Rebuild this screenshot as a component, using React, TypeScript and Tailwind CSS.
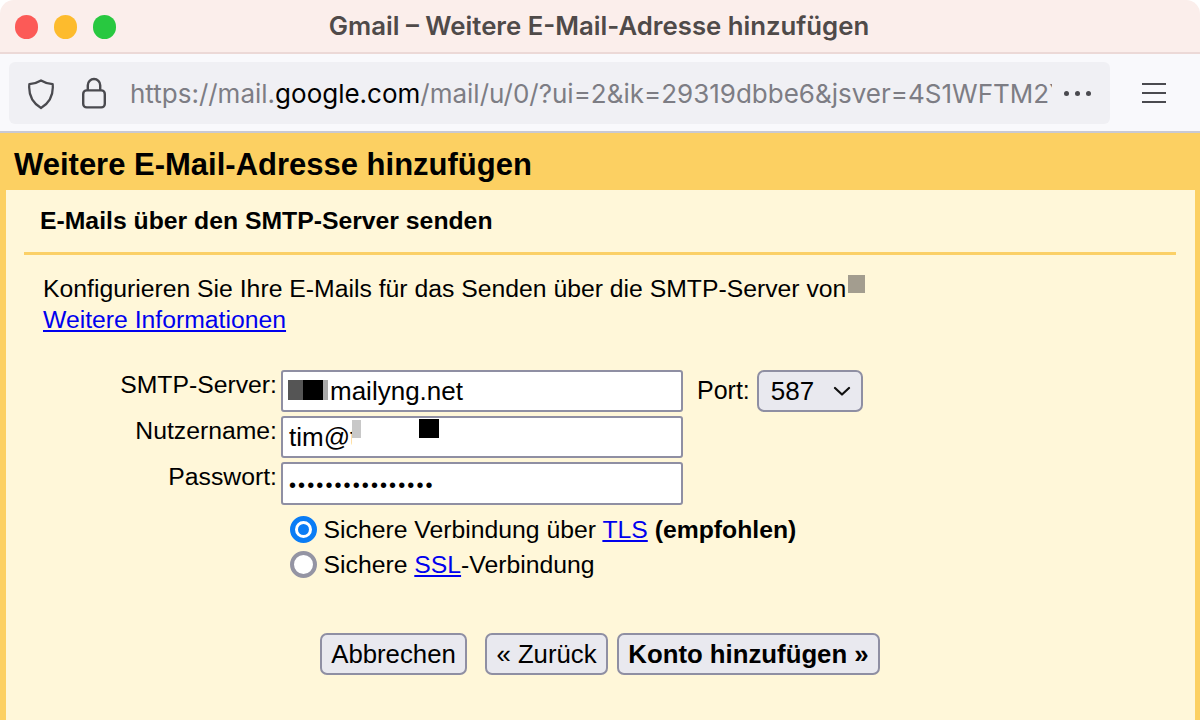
import React from "react";

const label = "w-[277px] text-right shrink-0 text-[24.75px] leading-[30px]";
const input = "relative w-[402px] h-[42px] bg-white border-2 border-[#8f8fa3] rounded-[3px] flex items-center pl-[6px] shrink-0 text-[26px] ml-[4px]";
const btn = "h-[42px] bg-[#e9e9ef] border-2 border-[#8f8fa3] rounded-[7px] flex items-center";

export default function App() {
  return (
    <div className="w-[1200px] h-[720px] overflow-hidden bg-white flex flex-col font-['Liberation_Sans',Arial,sans-serif] text-black">
      {/* title bar */}
      <div className="relative h-[54px] shrink-0 flex items-center justify-center bg-[#fbeeeb] border-b-2 border-[#ecd9d7] rounded-t-[14px]">
        <div className="absolute left-[15px] top-[15px] flex gap-[16px]">
          <span className="w-[23px] h-[24px] rounded-full bg-[#fc5a57]" />
          <span className="w-[23px] h-[24px] rounded-full bg-[#fdbb2d]" />
          <span className="w-[23px] h-[24px] rounded-full bg-[#28c840]" />
        </div>
        <span className="font-['Inter',sans-serif] font-semibold text-[25.75px] pr-[2px] text-[#4f4a49]">Gmail – Weitere E-Mail-Adresse hinzufügen</span>
      </div>
      {/* toolbar */}
      <div className="h-[79px] shrink-0 flex items-center bg-[#f9f9fc] border-b-2 border-[#c9c9d3] pl-[9px]">
        <div className="w-[1101px] h-[62px] rounded-[6px] bg-[#f0f0f4] flex items-center pl-[18px] pr-[16px]">
          <svg width="28" height="32" viewBox="0 0 30 34" fill="none" stroke="#4a4a4f" strokeWidth="2.4" strokeLinejoin="round" className="shrink-0 mt-[2px]">
            <path d="M15 2.5 C19 5 23 6 27.5 6.5 C28.5 17 25 26 15 32 C5 26 1.5 17 2.5 6.5 C7 6 11 5 15 2.5 Z" />
          </svg>
          <svg width="26" height="34" viewBox="0 0 26 34" fill="none" stroke="#4a4a4f" strokeWidth="2.4" className="shrink-0 ml-[26px] mt-[2px]">
            <rect x="2.2" y="13.4" width="21.6" height="17" rx="3.5" />
            <path d="M6.8 13.4 V8.2 a6.2 6.2 0 0 1 12.4 0 V13.4" />
          </svg>
          <div className="ml-[23px] w-[922px] pt-[2px] overflow-hidden whitespace-nowrap font-['Inter',sans-serif] text-[26px] text-[#7d7d84]">
            https://mail.<span className="text-black">google.com</span>/mail/u/0/?ui=2&amp;ik=29319dbbe6&amp;jsver=4S1WFTM2Y
          </div>
          <div className="ml-[12px] mt-[1px] flex gap-[6px] shrink-0">
            <span className="w-[5px] h-[5px] rounded-full bg-[#4a4a4f]" />
            <span className="w-[5px] h-[5px] rounded-full bg-[#4a4a4f]" />
            <span className="w-[5px] h-[5px] rounded-full bg-[#4a4a4f]" />
          </div>
        </div>
        <div className="ml-[32px] flex flex-col gap-[7px] shrink-0">
          <span className="w-[24px] h-[2px] bg-[#4a4a4f]" />
          <span className="w-[24px] h-[2px] bg-[#4a4a4f]" />
          <span className="w-[24px] h-[2px] bg-[#4a4a4f]" />
        </div>
      </div>
      {/* page */}
      <div className="flex-1 bg-[#fcd062] flex flex-col pl-[6px] pr-[5px]">
        <h1 className="h-[57px] shrink-0 flex items-center pl-[8px] pt-[7px] text-[31px] font-bold">Weitere E-Mail-Adresse hinzufügen</h1>
        <div className="flex-1 bg-[#fff7d9] pl-[18px] pr-[19px]">
          <div className="h-[65px] border-b-[3px] border-[#fbd067] pl-[16px] flex items-center text-[24.75px] font-bold">E-Mails über den SMTP-Server senden</div>
          <div className="pl-[19px] pt-[18px] text-[24.75px] leading-[31px]">
            <div className="flex items-start">
              Konfigurieren Sie Ihre E-Mails für das Senden über die SMTP-Server von
              <span className="w-[17px] h-[18px] bg-[#a39d8f] ml-[2px] mt-[2px]" />
            </div>
            <a className="text-[#0000ee] underline">Weitere Informationen</a>
          </div>
          <div className="mt-[35px] -ml-[24px] flex flex-col gap-[4px]">
            <div className="flex items-start">
              <div className={label}>SMTP-Server:</div>
              <div className={input}>
                <span className="pl-[41px]">mailyng.net</span>
                <span className="absolute left-[5px] top-[8px] w-[40px] h-[20px] bg-[linear-gradient(90deg,#555_0_38%,#000_38%_87%,#aaa_87%)]" />
              </div>
              <div className="flex items-center h-[42px] ml-[14px] text-[25px]">Port:</div>
              <div className={`${btn} w-[106px] ml-[7px] justify-between pl-[12px] pr-[10px] text-[26px]`}>
                587
                <svg width="18" height="10" viewBox="0 0 18 10" fill="none" stroke="#111" strokeWidth="2.2" strokeLinecap="round" strokeLinejoin="round">
                  <path d="M2 2 L9 8.5 L16 2" />
                </svg>
              </div>
            </div>
            <div className="flex items-start">
              <div className={label}>Nutzername:</div>
              <div className={input}>
                <span>tim@t</span>
                <span className="absolute left-[69px] top-0 w-[12px] h-full bg-white" />
                <span className="absolute left-[69px] top-[2px] w-[9px] h-[18px] bg-[#c8c8c8]" />
                <span className="absolute left-[136px] top-[1px] w-[20px] h-[19px] bg-black" />
              </div>
            </div>
            <div className="flex items-start">
              <div className={label}>Passwort:</div>
              <div className={`${input} !h-[43px]`}>
                <span className="text-[20px] tracking-[2.1px] pt-[2px]">••••••••••••••••</span>
              </div>
            </div>
          </div>
          <div className="pl-[266px] mt-[11px] text-[24.75px] flex flex-col gap-[8px]">
            <div className="flex items-center h-[27px]">
              <span className="w-[27px] h-[27px] rounded-full border-[5px] border-[#0a7cf5] bg-white flex items-center justify-center">
                <span className="w-[11px] h-[11px] rounded-full bg-[#0a7cf5]" />
              </span>
              <span className="ml-[6.5px]">Sichere Verbindung über <a className="text-[#0000ee] underline">TLS</a> <b>(empfohlen)</b></span>
            </div>
            <div className="flex items-center h-[27px]">
              <span className="w-[27px] h-[27px] rounded-full border-[4px] border-[#9494a3] bg-white" />
              <span className="ml-[6.5px]">Sichere <a className="text-[#0000ee] underline">SSL</a>-Verbindung</span>
            </div>
          </div>
          <div className="mt-[55px] pl-[296px] flex text-[25.75px]">
            <div className={`${btn} w-[147px] justify-center`}>Abbrechen</div>
            <div className={`${btn} w-[123px] ml-[18px] justify-center`}>« Zurück</div>
            <div className={`${btn} w-[263px] ml-[9px] font-bold justify-center`}>Konto hinzufügen »</div>
          </div>
        </div>
      </div>
    </div>
  );
}
